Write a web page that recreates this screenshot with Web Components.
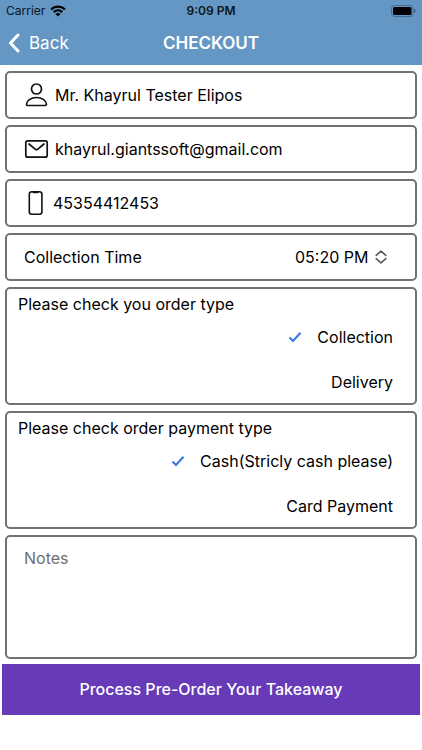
<!DOCTYPE html>
<html lang="en">
<head>
<meta charset="utf-8">
<meta name="viewport" content="width=device-width, initial-scale=1">
<title>Checkout</title>
<style>
  body { margin: 0; background: #fff; color: #000; font: 16px/20px Inter, "Liberation Sans", sans-serif; }
</style>
</head>
<body>
<checkout-page></checkout-page>

<script>
const define = (name, html, setup) => {
  const template = document.createElement('template');
  template.innerHTML = html;
  customElements.define(name, class extends HTMLElement {
    connectedCallback() {
      if (this.shadowRoot) return;
      this.attachShadow({ mode: 'open' }).append(template.content.cloneNode(true));
      if (setup) setup(this, this.shadowRoot);
    }
  });
};

define('status-bar', `
  <style>
    :host { display: grid; grid-template-columns: 1fr auto 1fr; align-items: center; height: 22px; padding: 0 6px; color: #0b1620; font-size: 12px; line-height: 16px; }
    .left { display: flex; align-items: center; gap: 5px; }
    .time { font-weight: 600; }
    .battery { justify-self: end; }
    svg { display: block; }
  </style>
  <span class="left"><span>Carrier</span>
    <svg width="16" height="12" viewBox="0 0 16 12" fill="none" stroke="#000" stroke-width="2.2">
      <path d="M1.1 4.4C5 .7 11 .7 14.9 4.4M3.7 7.1C6.2 4.7 9.8 4.7 12.3 7.1"/>
      <path d="M8 11.6 5.4 8.9C6.9 7.6 9.1 7.6 10.6 8.9Z" fill="#000" stroke="none"/>
    </svg>
  </span>
  <span class="time">9:09 PM</span>
  <svg class="battery" width="25" height="12" viewBox="0 0 25 12">
    <rect x=".5" y=".5" width="21.500" height="11" rx="3" fill="none" stroke="#456a8b"/>
    <rect x="2" y="2" width="18.500" height="8" rx="1.500" fill="#000"/>
    <path d="M23.200 4v4c.8-.3 1.300-1.100 1.300-2s-.5-1.700-1.300-2Z" fill="#345673"/>
  </svg>`);

define('nav-bar', `
  <style>
    :host { display: grid; grid-template-columns: 1fr auto 1fr; align-items: center; height: 41px; padding: 0 8px 2px; color: #fff; }
    a { display: flex; align-items: center; gap: 9px; color: inherit; font-size: 17px; text-decoration: none; justify-self: start; }
    h1 { margin: 0; font-size: 17px; line-height: 20px; font-weight: 600; }
    svg { display: block; }
  </style>
  <a href="#back">
    <svg width="12" height="20" viewBox="0 0 12 20" fill="none" stroke="#fff" stroke-width="3" stroke-linecap="round" stroke-linejoin="round"><path d="M10 2 2.500 10 10 18"/></svg>
    <span>Back</span>
  </a>
  <h1><slot></slot></h1>`);

define('form-card', `
  <style>
    :host { display: block; box-sizing: border-box; border: 2px solid #727274; border-radius: 5px; background: #fff; }
  </style>
  <slot></slot>`);

define('text-field', `
  <style>
    :host { display: block; }
    label { display: flex; align-items: center; height: 44px; padding: 0 16px 0 17px; gap: 6px; }
    input { flex: 1; min-width: 0; padding: 0; border: 0; outline: 0; background: none; color: inherit; font: inherit; }
    ::slotted(svg) { display: block; flex: none; }
  </style>
  <label><slot></slot><input></label>`,
  (host, root) => {
    const input = root.querySelector('input');
    input.type = host.getAttribute('type');
    input.value = host.getAttribute('value');
    input.setAttribute('aria-label', host.getAttribute('label'));
  });

define('time-field', `
  <style>
    :host { display: flex; align-items: center; justify-content: space-between; height: 44px; padding: 0 28px 0 17px; }
    .pick { display: flex; align-items: center; gap: 6px; }
    select { appearance: none; border: 0; padding: 0; margin: 0; background: none; color: inherit; font: inherit; outline: 0; }
    svg { display: block; }
  </style>
  <label for="time">Collection Time</label>
  <span class="pick">
    <select id="time"><option>05:20 PM</option></select>
    <svg width="12" height="14" viewBox="0 0 12 14" fill="none" stroke="#5c5c5e" stroke-width="1.700" stroke-linecap="round" stroke-linejoin="round"><path d="M1.200 5.300 6 1.200l4.800 4.100M1.200 8.700 6 12.800l4.800-4.100"/></svg>
  </span>`);

define('option-group', `
  <style>
    :host { display: block; }
    fieldset { margin: 0; border: 0; padding: 0 22px 9px 11px; min-width: 0; }
    legend { padding: 5px 0 0; }
    .list { display: flex; flex-direction: column; align-items: flex-end; gap: 21px; padding-top: 11px; }
    label { display: flex; align-items: center; gap: 15px; line-height: 24px; }
    .mark { display: grid; }
    .mark > * { grid-area: 1 / 1; }
    input { appearance: none; margin: 0; width: 14px; height: 12px; outline: 0; }
    svg { display: block; visibility: hidden; pointer-events: none; }
    input:checked + svg { visibility: visible; }
  </style>
  <fieldset><legend></legend><div class="list"></div></fieldset>`,
  (host, root) => {
    root.querySelector('legend').textContent = host.getAttribute('label');
    const list = root.querySelector('.list');
    host.getAttribute('options').split('|').forEach((text, index) => {
      const label = document.createElement('label');
      label.innerHTML = `<span class="mark"><input type="radio" name="choice"><svg width="14" height="12" viewBox="0 0 14 12" fill="none" stroke="#3c7be0" stroke-width="2.200"><path d="M1.500 6.500 5 10 12.500 1.800"/></svg></span><span></span>`;
      label.lastElementChild.textContent = text;
      label.querySelector('input').checked = index === 0;
      list.append(label);
    });
  });

define('notes-field', `
  <style>
    :host { display: block; }
    textarea { display: block; box-sizing: border-box; width: 100%; height: 120px; padding: 11px 17px; border: 0; outline: 0; resize: none; background: none; color: inherit; font: inherit; }
    textarea::placeholder { color: #6f6f71; opacity: 1; }
  </style>
  <textarea aria-label="Notes" placeholder="Notes"></textarea>`);

define('submit-button', `
  <style>
    :host { display: block; }
    button { display: block; width: 100%; padding: 15px 16px; border: 0; background: #673ab7; color: #fff; font: inherit; font-weight: 500; line-height: 21px; }
  </style>
  <button type="button"><slot></slot></button>`);

define('checkout-page', `
  <style>
    :host { display: block; }
    header { background: #6497c3; }
    main { display: grid; gap: 6px; padding: 6px 5px 5px; }
    footer { padding: 0 2px; }
  </style>
  <header>
    <status-bar></status-bar>
    <nav-bar>CHECKOUT</nav-bar>
  </header>
  <main>
    <form-card><text-field type="text" label="Name" value="Mr. Khayrul Tester Elipos">
      <svg width="25" height="26" viewBox="0 0 25 26" fill="none" stroke="#111" stroke-width="1.700" stroke-linejoin="round"><circle cx="12.500" cy="7" r="5"/><path d="M3.800 23.500c-.9 0-1.300-.5-1.300-1.300 0-3.300 4.300-6.700 10-6.700s10 3.400 10 6.700c0 .8-.4 1.300-1.300 1.300Z"/></svg>
    </text-field></form-card>
    <form-card><text-field type="email" label="Email" value="khayrul.giantssoft@gmail.com">
      <svg width="25" height="20" viewBox="0 0 25 20" fill="none" stroke="#111" stroke-width="1.700" stroke-linejoin="round" stroke-linecap="round"><rect x="1.800" y="1.800" width="21.400" height="16.400" rx="2"/><path d="m5 5 6.500 5.300q1 .8 2 0L20 5"/></svg>
    </text-field></form-card>
    <form-card><text-field type="tel" label="Phone" value="45354412453">
      <svg width="23" height="26" viewBox="0 0 23 26" fill="none" stroke="#111" stroke-width="1.600"><rect x="5.300" y="1.800" width="12.600" height="22.400" rx="2.500"/><path d="M8.500 1.500h6.200v.6q0 1.200-1.200 1.200H9.700q-1.200 0-1.200-1.200Z" fill="#111" stroke="none"/></svg>
    </text-field></form-card>
    <form-card><time-field></time-field></form-card>
    <form-card><option-group label="Please check you order type" options="Collection|Delivery"></option-group></form-card>
    <form-card><option-group label="Please check order payment type" options="Cash(Stricly cash please)|Card Payment"></option-group></form-card>
    <form-card><notes-field></notes-field></form-card>
  </main>
  <footer><submit-button>Process Pre-Order Your Takeaway</submit-button></footer>`);
</script>
</body>
</html>
